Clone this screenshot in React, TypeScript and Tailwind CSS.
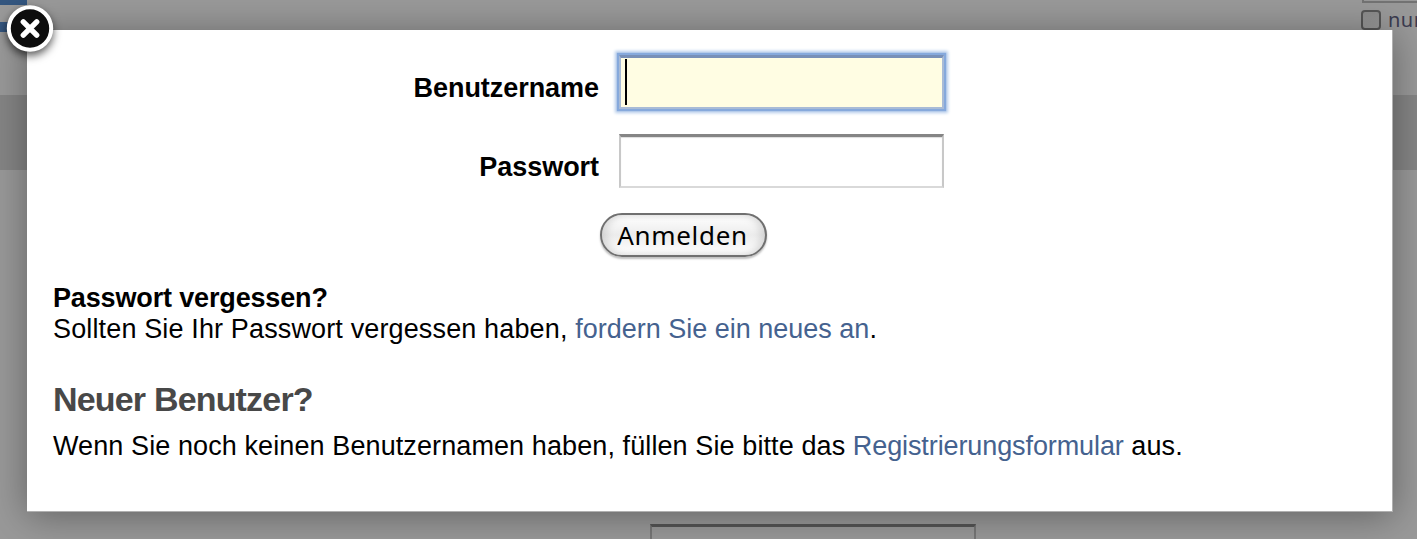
import React from "react";

function PageBehind() {
  return (
    <div className="flex h-[539px] flex-col bg-[#999999]">
      <div className="flex h-[95px] shrink-0 justify-between">
        <div className="w-[27px]">
          <div className="h-[5px] bg-[#34567f]" />
          <div className="mt-[17px] h-[10px] bg-[#34567f]" />
        </div>
        <div className="w-[56px] overflow-hidden">
          <div className="ml-px h-[3px] border-b-2 border-l-2 border-[#737373]" />
          <div className="mt-[7px] flex items-center gap-[7px]">
            <div className="h-[20px] w-[20px] shrink-0 rounded-[4px] border-2 border-[#555555] bg-linear-to-b from-[#8b8b8b] to-[#999999]" />
            <span className="font-['Noto_Sans',sans-serif] text-[20px] leading-[20px] tracking-[0.5px] text-[#3c3c50]">nur</span>
          </div>
        </div>
      </div>
      <div className="h-[75px] shrink-0 bg-[#858585]" />
      <div className="flex flex-1 items-end pl-[650px]">
        <div className="h-[15px] w-[326px] border-x-2 border-t-[3px] border-x-[#777777] border-t-[#555555] bg-[#999999]" />
      </div>
    </div>
  );
}

function CloseButton() {
  return (
    <button aria-label="Schließen" className="absolute -top-[25px] -left-[21px] h-[48px] w-[48px]">
      <svg viewBox="0 0 48 48" className="h-full w-full overflow-visible drop-shadow-[0_4px_4px_rgba(0,0,0,0.65)]">
        <circle cx="24" cy="23.5" r="21.2" fill="#0d0d0d" stroke="#ffffff" strokeWidth="4" />
        <path d="M17.3 16.8 30.7 30.2 M30.7 16.8 17.3 30.2" stroke="#ffffff" strokeWidth="5.4" strokeLinecap="round" />
      </svg>
    </button>
  );
}

export default function App() {
  return (
    <div className="relative h-[539px] w-[1417px] overflow-hidden font-['Liberation_Sans',Arial,sans-serif] text-[27px] leading-[32px] text-black">
      <PageBehind />
      <div className="absolute top-[30px] left-[27px] h-[482px] w-[1366px] border-r border-b border-[#b0b0b0] bg-white shadow-[0_4px_36px_rgba(0,0,0,0.36)]">
        <CloseButton />
        <form className="flex flex-col" onSubmit={(e) => e.preventDefault()}>
          <div className="flex h-[79px] pt-[25px]">
            <label className="w-[572px] pt-[17px] text-right font-bold tracking-[-0.05px]">Benutzername</label>
            <div className="ml-[20px] flex h-[54px] w-[325px] items-start border-2 border-t-[3px] border-[#a9bbd6] border-t-[#7890b8] bg-[#fffde3] pt-[1px] pl-[4px] shadow-[0_0_1px_2px_#86a9dc,0_0_3px_4px_#b4cbea]">
              <div className="h-[46px] w-[2px] bg-black" />
            </div>
          </div>
          <div className="flex h-[79px] pt-[25px]">
            <label className="w-[572px] pt-[17px] text-right font-bold tracking-[-0.05px]">Passwort</label>
            <div className="ml-[20px] h-[54px] w-[325px] border-2 border-t-[3px] border-[#c8c8c8] border-t-[#858585] border-b-[#d9d9d9] bg-white shadow-[inset_0_1px_1px_#dddddd]" />
          </div>
          <button className="mt-[25px] ml-[573px] flex h-[44px] w-[167px] items-center justify-center rounded-full border-2 border-[#707070] bg-linear-to-b from-[#ffffff] via-[#ececec] via-50% to-[#ffffff] pr-[2px] font-['Noto_Sans',sans-serif] text-[26px] tracking-[0.7px] shadow-[0_2px_2px_rgba(0,0,0,0.25),inset_5px_0_7px_rgba(0,0,0,0.1),inset_-5px_0_7px_rgba(0,0,0,0.1)]">
            Anmelden
          </button>
        </form>
        <div className="mt-[25px] pl-[26px] whitespace-nowrap">
          <p className="font-bold tracking-[-0.15px]">Passwort vergessen?</p>
          <p className="-mt-px tracking-[0.14px]">
            Sollten Sie Ihr Passwort vergessen haben, <a className="tracking-normal text-[#45628f]">fordern Sie ein neues an</a>.
          </p>
          <h2 className="mt-[34px] text-[34px] leading-[40px] font-bold tracking-[-0.82px] text-[#484848]">Neuer Benutzer?</h2>
          <p className="mt-[11px] tracking-[0.1px]">
            Wenn Sie noch keinen Benutzernamen haben, füllen Sie bitte das <a className="tracking-[-0.1px] text-[#45628f]">Registrierungsformular</a> aus.
          </p>
        </div>
      </div>
    </div>
  );
}
